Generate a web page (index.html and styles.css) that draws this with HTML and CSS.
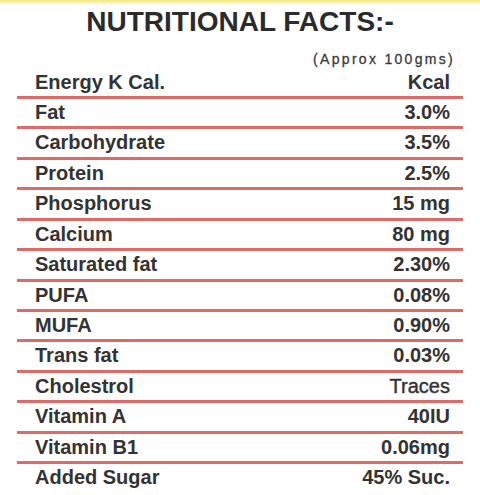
FILE: index.html
```html
<!DOCTYPE html>
<html lang="en">
<head>
  <meta charset="UTF-8">
  <meta name="viewport" content="width=device-width, initial-scale=1.0">
  <title>Nutritional Facts</title>
  <link rel="stylesheet" href="styles.css">
</head>
<body>
  <div class="top-strip"></div>

  <!-- Title -->
  <h1 class="title">NUTRITIONAL FACTS:-</h1>
  <div class="note">(Approx 100gms)</div>

  <!-- Facts table -->
  <div class="facts">
    <div class="row"><span>Energy K Cal.</span><span>Kcal</span></div>
    <div class="row"><span>Fat</span><span>3.0%</span></div>
    <div class="row"><span>Carbohydrate</span><span>3.5%</span></div>
    <div class="row"><span>Protein</span><span>2.5%</span></div>
    <div class="row"><span>Phosphorus</span><span>15 mg</span></div>
    <div class="row"><span>Calcium</span><span>80 mg</span></div>
    <div class="row"><span>Saturated fat</span><span>2.30%</span></div>
    <div class="row"><span>PUFA</span><span>0.08%</span></div>
    <div class="row"><span>MUFA</span><span>0.90%</span></div>
    <div class="row"><span>Trans fat</span><span>0.03%</span></div>
    <div class="row"><span>Cholestrol</span><span class="light">Traces</span></div>
    <div class="row"><span>Vitamin A</span><span>40IU</span></div>
    <div class="row"><span>Vitamin B1</span><span>0.06mg</span></div>
    <div class="row last"><span>Added Sugar</span><span>45% Suc.</span></div>
  </div>
</body>
</html>
```

FILE: styles.css
```css
body {
  margin: 0;
  background: #ffffff;
  font-family: 'Liberation Sans', Arial, sans-serif;
  color: #333333;
}
.top-strip {
  height: 4px;
  background: linear-gradient(to bottom, #f2ea78, #fbf8d8);
}
.title {
  margin: 4px 0 0;
  font-size: 28px;
  line-height: 28px;
  font-weight: bold;
  text-align: center;
  color: #2b2b2b;
}
.note {
  margin-top: 15px;
  padding-right: 25px;
  font-size: 14px;
  line-height: 16px;
  letter-spacing: 2.3px;
  text-align: right;
  color: #3a3a3a;
  -webkit-text-stroke: 0.3px #3a3a3a;
}
.facts {
  margin: 1.5px 17px 0;
}
.row {
  display: flex;
  justify-content: space-between;
  height: 27.45px;
  line-height: 27.45px;
  padding: 0 13px 0 18px;
  border-bottom: 3px solid #e26a66; /* red rule */
  font-size: 20px;
  font-weight: bold;
}
.row.last {
  border-bottom: none;
}
.light {
  font-weight: normal;
  -webkit-text-stroke: 0.4px #333333;
}
```
